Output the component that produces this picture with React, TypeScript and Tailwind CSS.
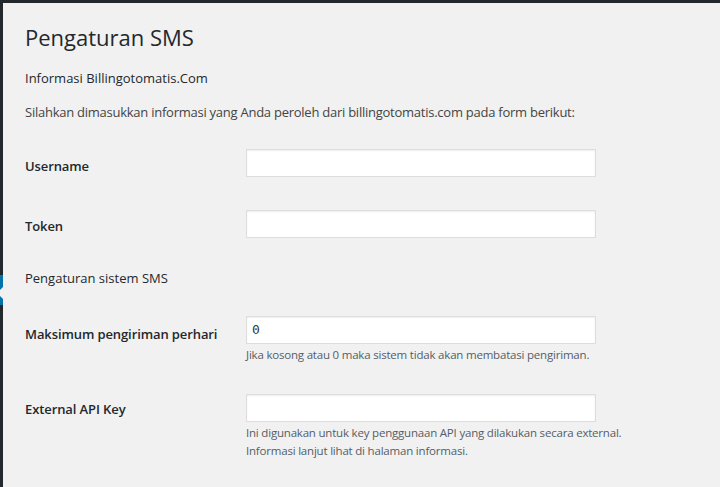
import React from 'react';

const font = { fontFamily: '"Open Sans", "Noto Sans", sans-serif' };

const TextInput: React.FC<{ value?: string }> = ({ value }) => (
  <div className="w-[350px] h-[28px] bg-white border border-[#dddddd] shadow-[inset_0_1px_2px_rgba(0,0,0,0.07)] flex items-center pl-[5px]">
    {value && (
      <span className="text-[13px] text-[#32373c] font-['DejaVu_Sans_Mono',monospace]">{value}</span>
    )}
  </div>
);

const Row: React.FC<{ label: string; mt: string; pt: string; value?: string; desc?: string[] }> = ({ label, mt, pt, value, desc }) => (
  <div className={`flex items-start ${mt}`}>
    <div className={`w-[221px] shrink-0 ${pt} text-[13px] leading-[18px] font-semibold text-[#23282d] tracking-[-0.1px]`}>{label}</div>
    <div>
      <TextInput value={value} />
      {desc && (
        <div className="mt-[2px] text-[11.5px] leading-[18px] tracking-[-0.2px] text-[#555d66]">
          {desc.map((d) => (
            <p key={d}>{d}</p>
          ))}
        </div>
      )}
    </div>
  </div>
);

export default function App() {
  return (
    <div className="w-[720px] h-[487px] flex flex-col bg-[#f1f1f1] overflow-hidden" style={font}>
      <div className="h-[3px] bg-[#23282d] shrink-0" />
      <div className="flex flex-1">
        {/* admin menu edge */}
        <div className="w-[3px] bg-[#23282d] shrink-0 pt-[272px]">
          <svg width="3" height="30" viewBox="0 0 3 30" className="block">
            <rect width="3" height="30" fill="#0073aa" />
            <polygon points="3,12 3,24 0,21 0,15" fill="#f1f1f1" />
          </svg>
        </div>

        <div className="flex-1 pl-[22px]">
          <h1 className="mt-[20px] text-[22px] leading-[29px] font-normal text-[#23282d]">Pengaturan SMS</h1>
          <h2 className="mt-[17px] text-[13px] leading-[18px] font-normal text-[#23282d]">Informasi Billingotomatis.Com</h2>
          <p className="mt-[16px] text-[13px] leading-[18px] tracking-[-0.25px] text-[#444444]">
            Silahkan dimasukkan informasi yang Anda peroleh dari billingotomatis.com pada form berikut:
          </p>

          <Row label="Username" mt="mt-[28px]" pt="pt-[8px]" />
          <Row label="Token" mt="mt-[33px]" pt="pt-[7px]" />

          <h2 className="mt-[31px] text-[13px] leading-[18px] font-normal text-[#23282d]">Pengaturan sistem SMS</h2>

          <Row
            label="Maksimum pengiriman perhari"
            mt="mt-[29px]"
            pt="pt-[9px]"
            value="0"
            desc={['Jika kosong atau 0 maka sistem tidak akan membatasi pengiriman.']}
          />
          <Row
            label="External API Key"
            mt="mt-[30px]"
            pt="pt-[6px]"
            desc={[
              'Ini digunakan untuk key penggunaan API yang dilakukan secara external.',
              'Informasi lanjut lihat di halaman informasi.',
            ]}
          />
        </div>
      </div>
    </div>
  );
}
